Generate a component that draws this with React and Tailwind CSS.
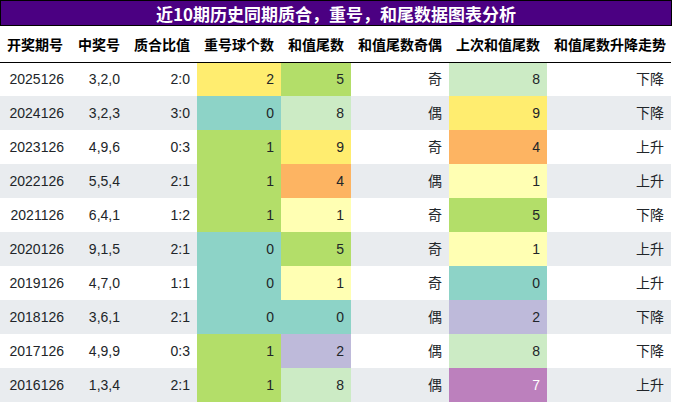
import React from "react";

const C = {
  teal: "bg-[#8dd3c7]",
  ly: "bg-[#ffffb3]",
  lav: "bg-[#bebada]",
  org: "bg-[#fdb462]",
  grn: "bg-[#b3de69]",
  lg: "bg-[#ccebc5]",
  yel: "bg-[#ffed6f]",
  pur: "bg-[#bc80bd] text-white",
};

const rows = [
  ["2025126", "3,2,0", "2:0", ["2", C.yel], ["5", C.grn], "奇", ["8", C.lg], "下降"],
  ["2024126", "3,2,3", "3:0", ["0", C.teal], ["8", C.lg], "偶", ["9", C.yel], "下降"],
  ["2023126", "4,9,6", "0:3", ["1", C.grn], ["9", C.yel], "奇", ["4", C.org], "上升"],
  ["2022126", "5,5,4", "2:1", ["1", C.grn], ["4", C.org], "偶", ["1", C.ly], "上升"],
  ["2021126", "6,4,1", "1:2", ["1", C.grn], ["1", C.ly], "奇", ["5", C.grn], "下降"],
  ["2020126", "9,1,5", "2:1", ["0", C.teal], ["5", C.grn], "奇", ["1", C.ly], "上升"],
  ["2019126", "4,7,0", "1:1", ["0", C.teal], ["1", C.ly], "奇", ["0", C.teal], "上升"],
  ["2018126", "3,6,1", "2:1", ["0", C.teal], ["0", C.teal], "偶", ["2", C.lav], "下降"],
  ["2017126", "4,9,9", "0:3", ["1", C.grn], ["2", C.lav], "偶", ["8", C.lg], "下降"],
  ["2016126", "1,3,4", "2:1", ["1", C.grn], ["8", C.lg], "偶", ["7", C.pur], "上升"],
];

const headers = ["开奖期号", "中奖号", "质合比值", "重号球个数", "和值尾数", "和值尾数奇偶", "上次和值尾数", "和值尾数升降走势"];
const widths = ["w-[71px]", "w-[56px]", "w-[70px]", "w-[84px]", "w-[70px]", "w-[98px]", "w-[98px]", "w-[124px]"];

export default function App() {
  return (
    <div className="w-[674px] h-[404px] bg-white overflow-hidden font-['Liberation_Sans','Noto_Sans_CJK_SC',sans-serif]">
      <div className="w-[672px] h-[26px] bg-[#4b0082] border border-black flex items-center justify-center text-white font-bold text-[17px] leading-none font-['Noto_Sans_CJK_SC','Liberation_Sans',sans-serif]">
        近10期历史同期质合，重号，和尾数据图表分析
      </div>
      <table className="w-[671px] table-fixed border-collapse">
        <colgroup>
          {widths.map((w, i) => (
            <col key={i} className={w} />
          ))}
        </colgroup>
        <thead>
          <tr className="h-[36px] border-b border-black">
            {headers.map((h) => (
              <th key={h} className="text-left pl-[7px] pr-0 text-[14px] font-bold text-black whitespace-nowrap font-['Noto_Sans_CJK_SC',sans-serif] leading-none">
                {h}
              </th>
            ))}
          </tr>
        </thead>
        <tbody>
          {rows.map((r, i) => (
            <tr key={i} className={`h-[34px] text-[14px] text-[#212529] ${i % 2 === 1 ? "bg-[#e9ecef]" : "bg-white"}`}>
              {r.map((c, j) => {
                const isArr = Array.isArray(c);
                return (
                  <td key={j} className={`text-right pr-[7px] pl-0 leading-none ${isArr ? c[1] : ""}`}>
                    {isArr ? c[0] : c}
                  </td>
                );
              })}
            </tr>
          ))}
        </tbody>
      </table>
    </div>
  );
}
